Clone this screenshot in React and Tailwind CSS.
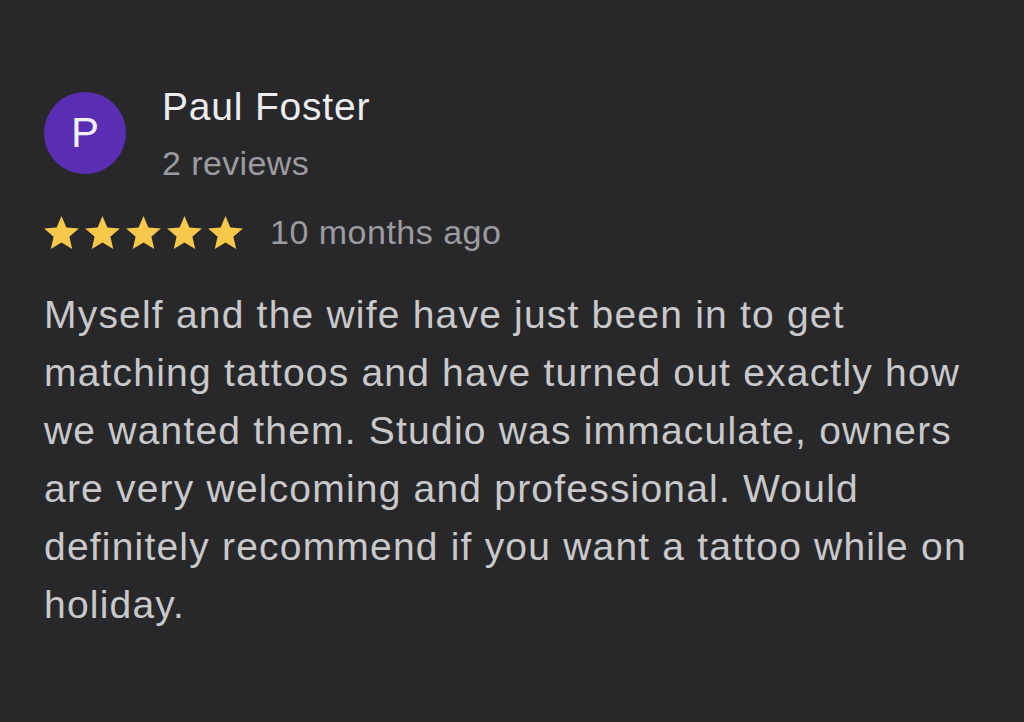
import React from 'react';

const Star = () => (
  <svg width="35" height="33" viewBox="2 2 20 19" className="shrink-0">
    <path d="M12 17.27L18.18 21l-1.64-7.03L22 9.24l-7.19-.61L12 2 9.19 8.63 2 9.24l5.46 4.73L5.82 21z" fill="#f7c84a" />
  </svg>
);

export default function App() {
  return (
    <div
      className="min-h-[722px] w-full bg-[#28282a] pl-[44px] pr-[36px] pt-[83px]"
      style={{ fontFamily: '"Liberation Sans", Arial, sans-serif' }}
    >
      {/* Reviewer */}
      <div className="flex items-start">
        <div className="mt-[9px] flex h-[82px] w-[82px] shrink-0 items-center justify-center rounded-full bg-[#5a2eb4] text-[42px] leading-none text-[#f2f0f8]">
          P
        </div>
        <div className="ml-[36px] flex flex-col">
          <div className="text-[39px] leading-[48px] tracking-[0.8px] text-[#ededef]">Paul Foster</div>
          <div className="mt-[10px] text-[34px] leading-[44px] tracking-[0.4px] text-[#9b9ba0]">2 reviews</div>
        </div>
      </div>

      {/* Rating */}
      <div className="mt-[25px] flex items-center">
        <div className="flex gap-[6px]">
          <Star />
          <Star />
          <Star />
          <Star />
          <Star />
        </div>
        <div className="ml-[27px] text-[34px] leading-[44px] tracking-[0.5px] text-[#9b9ba0]">10 months ago</div>
      </div>

      {/* Body */}
      <p className="mt-[32px] text-[39px] leading-[58px] tracking-[1.2px] text-[#c9c9cc]">
        Myself and the wife have just been in to get matching tattoos and have turned out exactly how we wanted them. Studio was immaculate, owners are very welcoming and professional. Would definitely recommend if you want a tattoo while on holiday.
      </p>
    </div>
  );
}
